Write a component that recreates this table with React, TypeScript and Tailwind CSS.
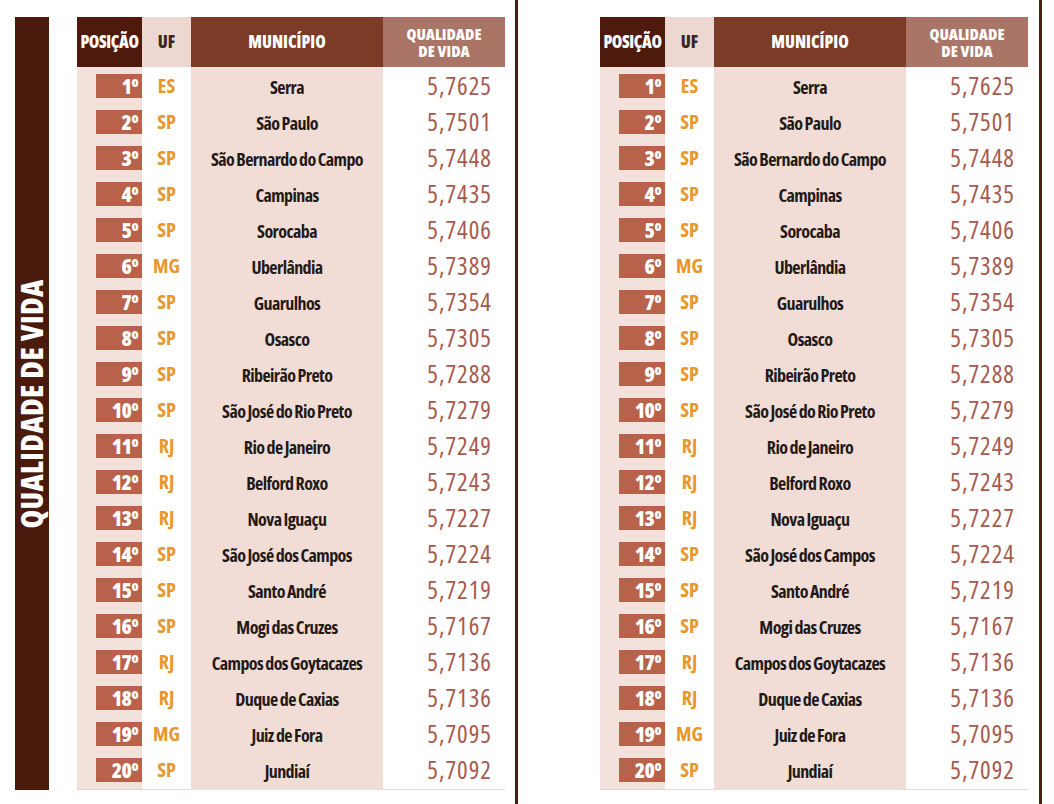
import React from "react";

const rows: [string, string, string, string][] = [
  ["1º", "ES", "Serra", "5,7625"],
  ["2º", "SP", "São Paulo", "5,7501"],
  ["3º", "SP", "São Bernardo do Campo", "5,7448"],
  ["4º", "SP", "Campinas", "5,7435"],
  ["5º", "SP", "Sorocaba", "5,7406"],
  ["6º", "MG", "Uberlândia", "5,7389"],
  ["7º", "SP", "Guarulhos", "5,7354"],
  ["8º", "SP", "Osasco", "5,7305"],
  ["9º", "SP", "Ribeirão Preto", "5,7288"],
  ["10º", "SP", "São José do Rio Preto", "5,7279"],
  ["11º", "RJ", "Rio de Janeiro", "5,7249"],
  ["12º", "RJ", "Belford Roxo", "5,7243"],
  ["13º", "RJ", "Nova Iguaçu", "5,7227"],
  ["14º", "SP", "São José dos Campos", "5,7224"],
  ["15º", "SP", "Santo André", "5,7219"],
  ["16º", "SP", "Mogi das Cruzes", "5,7167"],
  ["17º", "RJ", "Campos dos Goytacazes", "5,7136"],
  ["18º", "RJ", "Duque de Caxias", "5,7136"],
  ["19º", "MG", "Juiz de Fora", "5,7095"],
  ["20º", "SP", "Jundiaí", "5,7092"],
];

const font = "font-['Open_Sans','Liberation_Sans',sans-serif] font-stretch-condensed";

function Table() {
  return (
    <div className={`w-[428px] ${font}`}>
      <div className="grid grid-cols-[65px_49px_192px_122px] h-[50px]">
        <div className="bg-[#4d1a0c] text-white font-extrabold text-[17px] tracking-[-0.4px] flex items-center justify-center">
          POSIÇÃO
        </div>
        <div className="bg-[#ecd8d0] text-[#3b2620] font-extrabold text-[17px] flex items-center justify-center">
          UF
        </div>
        <div className="bg-[#7b3b26] text-white font-extrabold text-[17px] flex items-center justify-center">
          MUNICÍPIO
        </div>
        <div className="bg-[#aa7566] text-white font-extrabold text-[16px] flex flex-col items-center justify-center pt-[2px]">
          <span className="block h-[17px] leading-[17px]">QUALIDADE</span>
          <span className="block h-[17px] leading-[17px]">DE VIDA</span>
        </div>
      </div>
      {rows.map(([pos, uf, city, val]) => (
        <div key={pos} className="grid grid-cols-[65px_49px_192px_122px] h-[36px]">
          <div className="bg-[#f3e2dc] border-b border-[#ddd0cc] flex items-center justify-end">
            <div className="w-[46px] h-[24px] bg-[#b9624b] text-white font-extrabold text-[21px] leading-[24px] text-right pr-[4px] tracking-[-0.6px]">
              {pos}
            </div>
          </div>
          <div className="bg-white border-b border-[#e2d8d5] flex items-center justify-center text-[#e9962a] font-bold text-[20px]">
            {uf}
          </div>
          <div className="bg-[#f1ddd6] flex items-center justify-center pt-[3px] text-[#231a17] font-bold text-[18px] tracking-[-0.6px] [word-spacing:-0.5px]">
            {city}
          </div>
          <div className="bg-white border-b border-[#e2d8d5] flex items-center justify-end pr-[13px] text-[#a65a4e] font-medium text-[25px] tracking-[1px]">
            {val}
          </div>
        </div>
      ))}
    </div>
  );
}

export default function App() {
  return (
    <div className="w-[1054px] h-[804px] bg-white flex">
      <div className="w-[515px] flex pt-[17px] pl-[15px]">
        <div className={`w-[34px] h-[773px] bg-[#4a1a0c] flex items-center justify-center ${font}`}>
          <span className="-rotate-90 whitespace-nowrap text-white font-extrabold text-[30px] tracking-[0.4px] leading-none">
            QUALIDADE DE VIDA
          </span>
        </div>
        <div className="ml-[28px]">
          <Table />
        </div>
      </div>
      <div className="w-[3px] bg-[#4a1e10]" />
      <div className="w-[521px] pt-[17px] pl-[82px]">
        <Table />
      </div>
      <div className="w-[3px] bg-[#4a1e10]" />
    </div>
  );
}
